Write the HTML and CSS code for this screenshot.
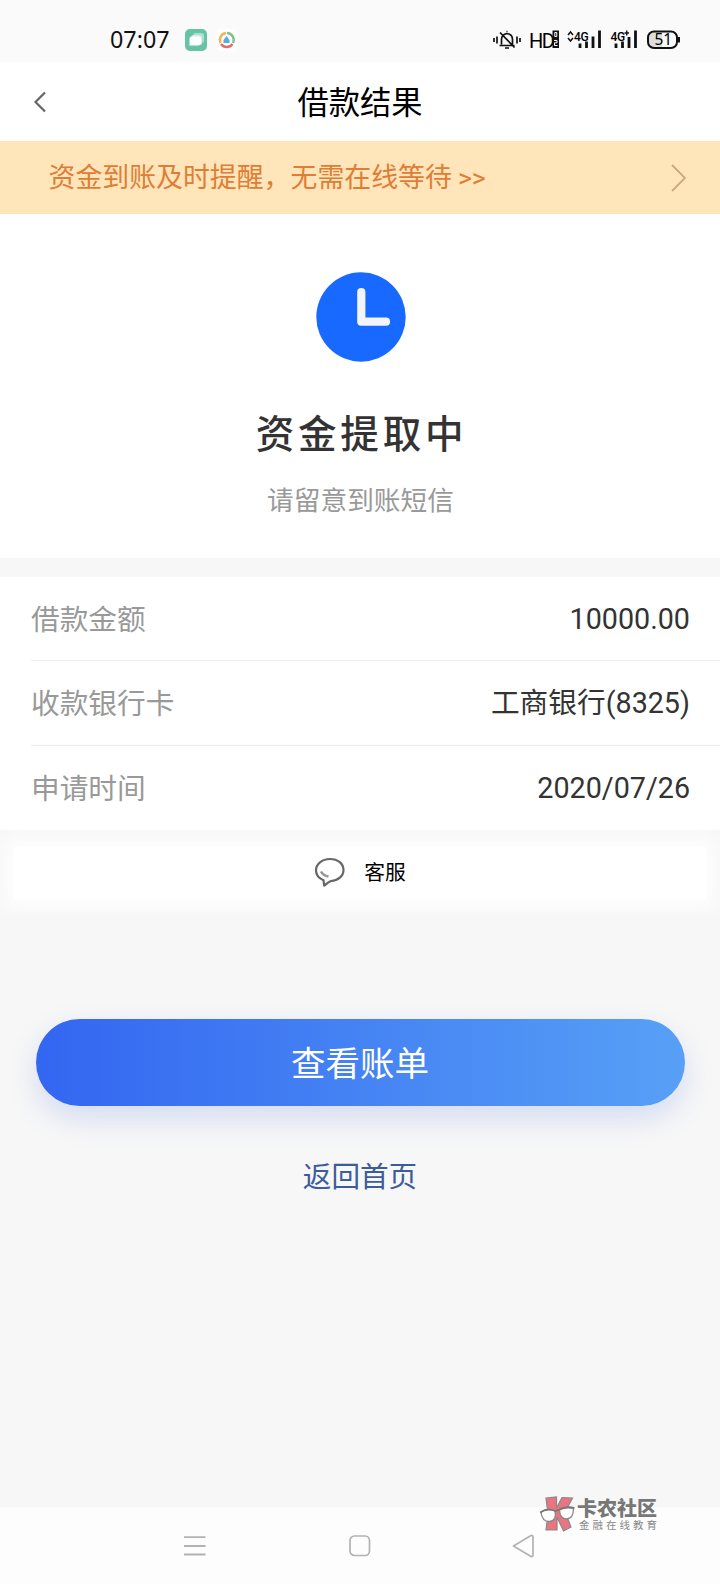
FILE: index.html
```html
<!DOCTYPE html>
<html lang="zh-CN">
<head>
<meta charset="utf-8">
<title>借款结果</title>
<link rel="stylesheet" href="styles.css">
</head>
<body>
<div class="screen">
  <div class="status">
    <span class="time">07:07</span>
    <svg class="apps" width="56" height="26" viewBox="0 0 56 26">
      <rect x="0" y="2" width="22" height="22" rx="5" fill="#66c3a5"/>
      <rect x="8" y="6" width="11" height="10" rx="2.500" fill="#a9dfcd"/>
      <rect x="6" y="8" width="11" height="10" rx="2.500" fill="#d3efe6"/>
      <path d="M7 9.500h6a3 3 0 0 1 3 3v3a3 3 0 0 1-3 3H4.500v-6.500a2.500 2.500 0 0 1 2.500-2.500z" fill="#fff"/>
      <rect x="31" y="2" width="22" height="22" rx="5" fill="#fff"/>
      <g fill="none" stroke-width="2.400">
        <path d="M41 6A7 7 0 0 0 35.600 16" stroke="#f0b552"/>
        <path d="M42 6A7 7 0 0 1 48 16" stroke="#7cc288"/>
        <path d="M36 17A7 7 0 0 0 47.500 17" stroke="#e26e68"/>
      </g>
      <path d="M41.500 9l3 4v3h-6v-3z" fill="#55aede"/>
    </svg>
    <svg class="signals" width="190" height="28" viewBox="0 0 190 28">
      <g fill="none" stroke="#111" stroke-width="1.700">
        <path d="M1 12v4M4 10.500v7M24 10.500v7M27 12v4"/>
        <path d="M6.500 19.500h15M8.500 18.500v-5q0-5 5.500-6q5.500 1 5.500 6v5M7 6.500l14.500 15M12 22h4M13.500 5.500h1"/>
      </g>
      <text x="36" y="21.500" class="hd">HD</text>
      <rect x="59.500" y="4.500" width="6.500" height="17.500" fill="#111"/>
      <path d="M61.800 6.500h2v4h-2zM61 14.500h3v2.300h-2.500v2.700h3" fill="none" stroke="#fff" stroke-width="1"/>
      <path d="M75 9l2.500-3l2.500 3M75 12l2.500 3l2.500-3" fill="none" stroke="#111" stroke-width="1.500"/>
      <text x="81" y="14.500" class="net">4G</text>
      <path d="M87 17.500v4.500M93.500 15.500v6.500M100 10.500v11.500M106.500 4.500v17.500" stroke="#111" stroke-width="2.800"/>
      <text x="117.500" y="14.500" class="net">4G</text>
      <path d="M131.500 7h4.500M133.700 4.500v5" stroke="#111" stroke-width="1.400"/>
      <path d="M123 17.500v4.500M129.500 15.500v6.500M136 11v11M142.500 4.500v17.500" stroke="#111" stroke-width="2.800"/>
      <path d="M160 6h9v16h-9a5 5 0 0 1-5-5v-6a5 5 0 0 1 5-5z" fill="#ddd"/>
      <rect x="155" y="5.500" width="29" height="16.500" rx="6" fill="none" stroke="#111" stroke-width="2"/>
      <path d="M186 11v5.500" stroke="#111" stroke-width="2"/>
      <text x="161.500" y="19" class="battery">51</text>
    </svg>
  </div>
  <header class="header">
    <svg class="back" width="14" height="22" viewBox="0 0 14 22"><path d="M12 1.500L2.500 11l9.500 9.500" fill="none" stroke="#666" stroke-width="2.200"/></svg>
    <h1 class="title">借款结果</h1>
  </header>
  <div class="banner">
    <span class="banner-text">资金到账及时提醒，无需在线等待 <span class="arrows">&gt;&gt;</span></span>
    <svg width="16" height="28" viewBox="0 0 16 28"><path d="M1 1l13 13L1 27" fill="none" stroke="#c4ab82" stroke-width="1.800"/></svg>
  </div>
  <section class="result">
    <svg class="clock" width="90" height="90" viewBox="0 0 90 90">
      <circle cx="45" cy="45" r="44.700" fill="#1769ff"/>
      <path d="M45.300 20v29.700H70" fill="none" stroke="#f3f5fd" stroke-width="8.200" stroke-linecap="round" stroke-linejoin="round"/>
    </svg>
    <h2 class="result-title">资金提取中</h2>
    <p class="result-note">请留意到账短信</p>
  </section>
  <dl class="details">
    <div class="row"><dt>借款金额</dt><dd>10000.00</dd></div>
    <div class="row"><dt>收款银行卡</dt><dd>工商银行(8325)</dd></div>
    <div class="row"><dt>申请时间</dt><dd>2020/07/26</dd></div>
  </dl>
  <div class="service">
    <div class="service-card">
      <svg width="32" height="30" viewBox="0 0 32 30">
        <path d="M9.500 23.200C4.500 21 2 17.500 2 13.500C2 7 8 2 16 2s13.500 4.800 13.500 11S24 23.500 17 24q-2.500 1-4 2.500l-2.800 2z" fill="none" stroke="#666" stroke-width="2.200" stroke-linejoin="round"/>
        <path d="M7 14.500q2 4 7.500 5" fill="none" stroke="#999" stroke-width="2.600"/>
      </svg>
      <span>客服</span>
    </div>
  </div>
  <div class="actions">
    <button class="primary">查看账单</button>
    <a class="home">返回首页</a>
  </div>
  <nav class="nav">
    <svg width="22" height="22" viewBox="0 0 22 22"><path d="M0 2.200h21.500M0 11h21.500M0 19.500h21.500" stroke="#b2b2b2" stroke-width="1.800"/></svg>
    <svg class="nav-home" width="22" height="22" viewBox="0 0 22 22"><rect x="1" y="1" width="19.500" height="19.500" rx="4.500" fill="none" stroke="#b2b2b2" stroke-width="1.700"/></svg>
    <svg width="22" height="24" viewBox="0 0 22 24"><path d="M1.500 12L19 1.500Q21 1 21 3v18q0 2-2 1.500z" fill="none" stroke="#b2b2b2" stroke-width="1.700" stroke-linejoin="round"/></svg>
  </nav>
  <div class="watermark">
    <svg width="35" height="36" viewBox="0 0 35 36">
      <path d="M6 2L16.500 1V12L22 1.500L32.500 2L25 16L31 31L23.500 35L17 21V34H6L8 18z" fill="#ea7580" stroke="#888" stroke-width="1.200"/>
      <path d="M1 16q6-4.500 14-1q2 9-5 10.500Q2 26 1 16z" fill="#fff" stroke="#888" stroke-width="1.300"/>
      <path d="M19.500 14q6-4 14-1.500q0 10-7 10.500q-6.500 0-7-9z" fill="#fff" stroke="#888" stroke-width="1.300"/>
      <path d="M0 16.500q7-5 15.500-1.500l4-1.500q7-3.500 15-1.500" fill="none" stroke="#777" stroke-width="1.800"/>
    </svg>
    <div class="mark-text">
      <span class="mark-name">卡农社区</span>
      <span class="mark-sub">金融在线教育</span>
    </div>
  </div>
</div>
</body>
</html>
```

FILE: styles.css
```css
* { box-sizing: border-box; margin: 0; padding: 0; }
body { background: #f7f7f7; font-family: "Noto Sans CJK SC", sans-serif; }
.screen { position: relative; width: 720px; height: 1584px; display: flex; flex-direction: column; overflow: hidden; }
.status { height: 62px; flex: none; background: #fafafa; display: flex; align-items: center; padding: 17px 37px 0 110px; }
.time { width: 75px; font: 23.3px/45px "Noto Sans", sans-serif; color: #111; padding-bottom: 1px; }
.signals { margin-left: auto; }
.hd { font: 20px "Roboto", sans-serif; letter-spacing: -1.5px; }
.net { font: 500 12px "Roboto", sans-serif; letter-spacing: -0.3px; }
.battery { font: 15.5px "Noto Sans", sans-serif; }
.header { height: 79px; flex: none; background: #fff; display: flex; align-items: center; padding: 0 33px; }
.back { flex: none; }
.title { flex: 1; margin-right: 14px; padding-bottom: 2px; text-align: center; font-size: 31.3px; line-height: 44px; font-weight: 400; color: #000; }
.banner { height: 73px; flex: none; background: #ffe5b9; display: flex; align-items: center; justify-content: space-between; padding: 0 33px 0 48.5px; color: #df7d35; }
.banner-text { font-size: 26.9px; line-height: 40px; white-space: nowrap; padding-bottom: 1px; }
.arrows { font-family: "Roboto", sans-serif; font-size: 26.7px; }
.result { height: 344px; flex: none; background: #fff; display: flex; flex-direction: column; align-items: center; padding-top: 58px; }
.clock { margin-left: 1px; }
.result-title { margin-top: 40px; font-size: 38.6px; line-height: 58px; letter-spacing: 3.7px; padding-left: 3px; font-weight: 500; color: #333; }
.result-note { margin-top: 19px; font-size: 26.7px; line-height: 40px; color: #999; padding-left: 1px; }
.details { margin-top: 19px; flex: none; height: 253px; background: #fff; padding-left: 31px; }
.row { height: 84.3px; display: flex; align-items: center; justify-content: space-between; padding-right: 30px; border-bottom: 1px solid #ececec; font-size: 28.7px; line-height: 44px; }
.row:last-child { border-bottom: 0; }
.row dt { color: #999; padding-bottom: 2px; }
.row dd { color: #333; font-family: "Roboto", "Noto Sans CJK SC", sans-serif; padding-top: 1px; }
.service { height: 84px; flex: none; overflow: hidden; background: #f8f8f8; padding: 17px 14px 14px; }
.service-card { height: 53px; background: #fff; box-shadow: 0 0 18px 6px #fff; display: flex; align-items: center; justify-content: center; gap: 18px; font-size: 20.8px; line-height: 30px; color: #000; padding-bottom: 4px; }
.service-card span { padding-bottom: 2px; }
.actions { flex: 1; display: flex; flex-direction: column; align-items: center; padding-top: 105px; }
.primary { width: 649px; height: 87px; border: 0; border-radius: 43.5px; background: linear-gradient(90deg, #3366f1, #57a0f6); box-shadow: 0 12px 30px rgba(70, 110, 220, 0.2); font-family: inherit; font-size: 34.5px; line-height: 50px; color: #fff; padding-bottom: 3px; }
.home { margin-top: 47px; font-size: 28.6px; line-height: 44px; color: #3c5c9c; }
.nav { height: 77px; flex: none; background: #fdfdfd; display: flex; justify-content: space-between; align-items: center; padding: 0 186px 0 184px; }
.nav-home { margin-left: 2px; }
.watermark { position: absolute; left: 540px; top: 1496px; display: flex; gap: 2px; }
.mark-text { display: flex; flex-direction: column; color: #777; white-space: nowrap; }
.mark-name { font-size: 20px; line-height: 23px; font-weight: 900; }
.mark-sub { font-size: 10.5px; line-height: 11px; letter-spacing: 3px; padding-left: 2px; color: #888; }
```
